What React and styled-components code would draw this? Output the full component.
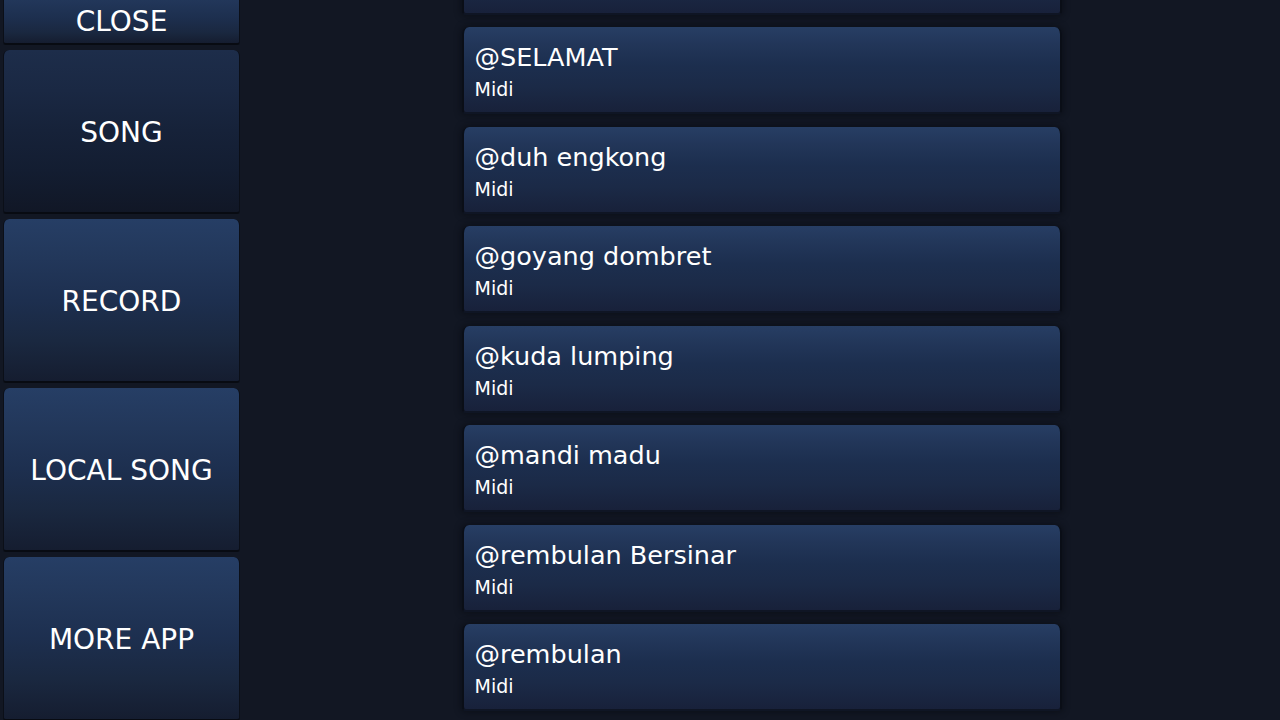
import React from "react";
import styled, { createGlobalStyle } from "styled-components";

const songs = [
  { title: "@SELAMAT", kind: "Midi" },
  { title: "@duh engkong", kind: "Midi" },
  { title: "@goyang dombret", kind: "Midi" },
  { title: "@kuda lumping", kind: "Midi" },
  { title: "@mandi madu", kind: "Midi" },
  { title: "@rembulan Bersinar", kind: "Midi" },
  { title: "@rembulan", kind: "Midi" },
];

const menu = [
  { label: "SONG", active: true },
  { label: "RECORD" },
  { label: "LOCAL SONG" },
  { label: "MORE APP" },
];

const App = () => {
  return (
    <Screen>
      <GlobalStyle />
      <Sidebar>
        <MenuButton $short>CLOSE</MenuButton>
        {menu.map((m) => (
          <MenuButton key={m.label} $active={m.active}>
            {m.label}
          </MenuButton>
        ))}
      </Sidebar>
      <ListPane>
        <List>
          {/* previous row, scrolled mostly out of view */}
          <SongCard />
          {songs.map((s) => (
            <SongCard key={s.title}>
              <Title>{s.title}</Title>
              <Kind>{s.kind}</Kind>
            </SongCard>
          ))}
        </List>
      </ListPane>
    </Screen>
  );
};

const GlobalStyle = createGlobalStyle`
  html, body {
    margin: 0;
    padding: 0;
    background: #121723;
    overflow: hidden;
  }
  body {
    font-family: "DejaVu Sans", Verdana, sans-serif;
    color: #ffffff;
  }
`;

const Screen = styled.div`
  display: flex;
  width: 1280px;
  height: 720px;
  overflow: hidden;
  background: #121723;
`;

const Sidebar = styled.div`
  width: 237px;
  padding: 0 3px;
  flex-shrink: 0;
  height: 720px;
  overflow: hidden;
  display: flex;
  flex-direction: column;
  gap: 5px;
`;

const MenuButton = styled.div`
  height: ${(p) => (p.$short ? "45px" : "164px")};
  flex-shrink: 0;
  display: flex;
  align-items: center;
  justify-content: center;
  box-sizing: border-box;
  padding-top: ${(p) => (p.$short ? "0" : "2px")};
  border-radius: ${(p) => (p.$short ? "0 0 3px 3px" : "6px 6px 3px 3px")};
  border-left: 1px solid #0b0f18;
  border-right: 1px solid #0b0f18;
  border-bottom: 2px solid #080b12;
  font-size: 28px;
  color: #ffffff;
  background: ${(p) =>
    p.$active
      ? "linear-gradient(to bottom, #1d2d4a 0%, #1a2843 25%, #162239 50%, #131d31 75%, #111726 100%)"
      : p.$short
      ? "linear-gradient(to bottom, #22375a 0%, #1d2f4f 40%, #1a2840 75%, #151d30 100%)"
      : "linear-gradient(to bottom, #263e65 0%, #22375a 25%, #1d2f4f 50%, #1a2840 75%, #151d30 100%)"};
`;

const ListPane = styled.div`
  flex: 1;
  display: flex;
  justify-content: center;
  height: 720px;
  overflow: hidden;
`;

const List = styled.div`
  width: 600px;
  display: flex;
  flex-direction: column;
  gap: 12.5px;
  margin-top: -72.5px;
`;

const SongCard = styled.div`
  height: 87px;
  flex-shrink: 0;
  box-sizing: border-box;
  padding: 15px 12px 0 11px;
  border-radius: 7px 7px 4px 4px;
  border-left: 2px solid #0a0e17;
  border-right: 2px solid #0a0e17;
  border-bottom: 2px solid #0f1524;
  box-shadow: 0 0 6px 1px rgba(8, 11, 18, 0.7);
  background: linear-gradient(
    to bottom,
    #273e64 0%,
    #223659 20%,
    #1c2e4e 45%,
    #1b2a47 70%,
    #18213a 100%
  );
  display: flex;
  flex-direction: column;
`;

const Title = styled.div`
  font-size: 25.5px;
  line-height: 30px;
  color: #ffffff;
  white-space: nowrap;
`;

const Kind = styled.div`
  margin-top: 6px;
  font-size: 19px;
  line-height: 22px;
  color: #ffffff;
`;

export default App;
